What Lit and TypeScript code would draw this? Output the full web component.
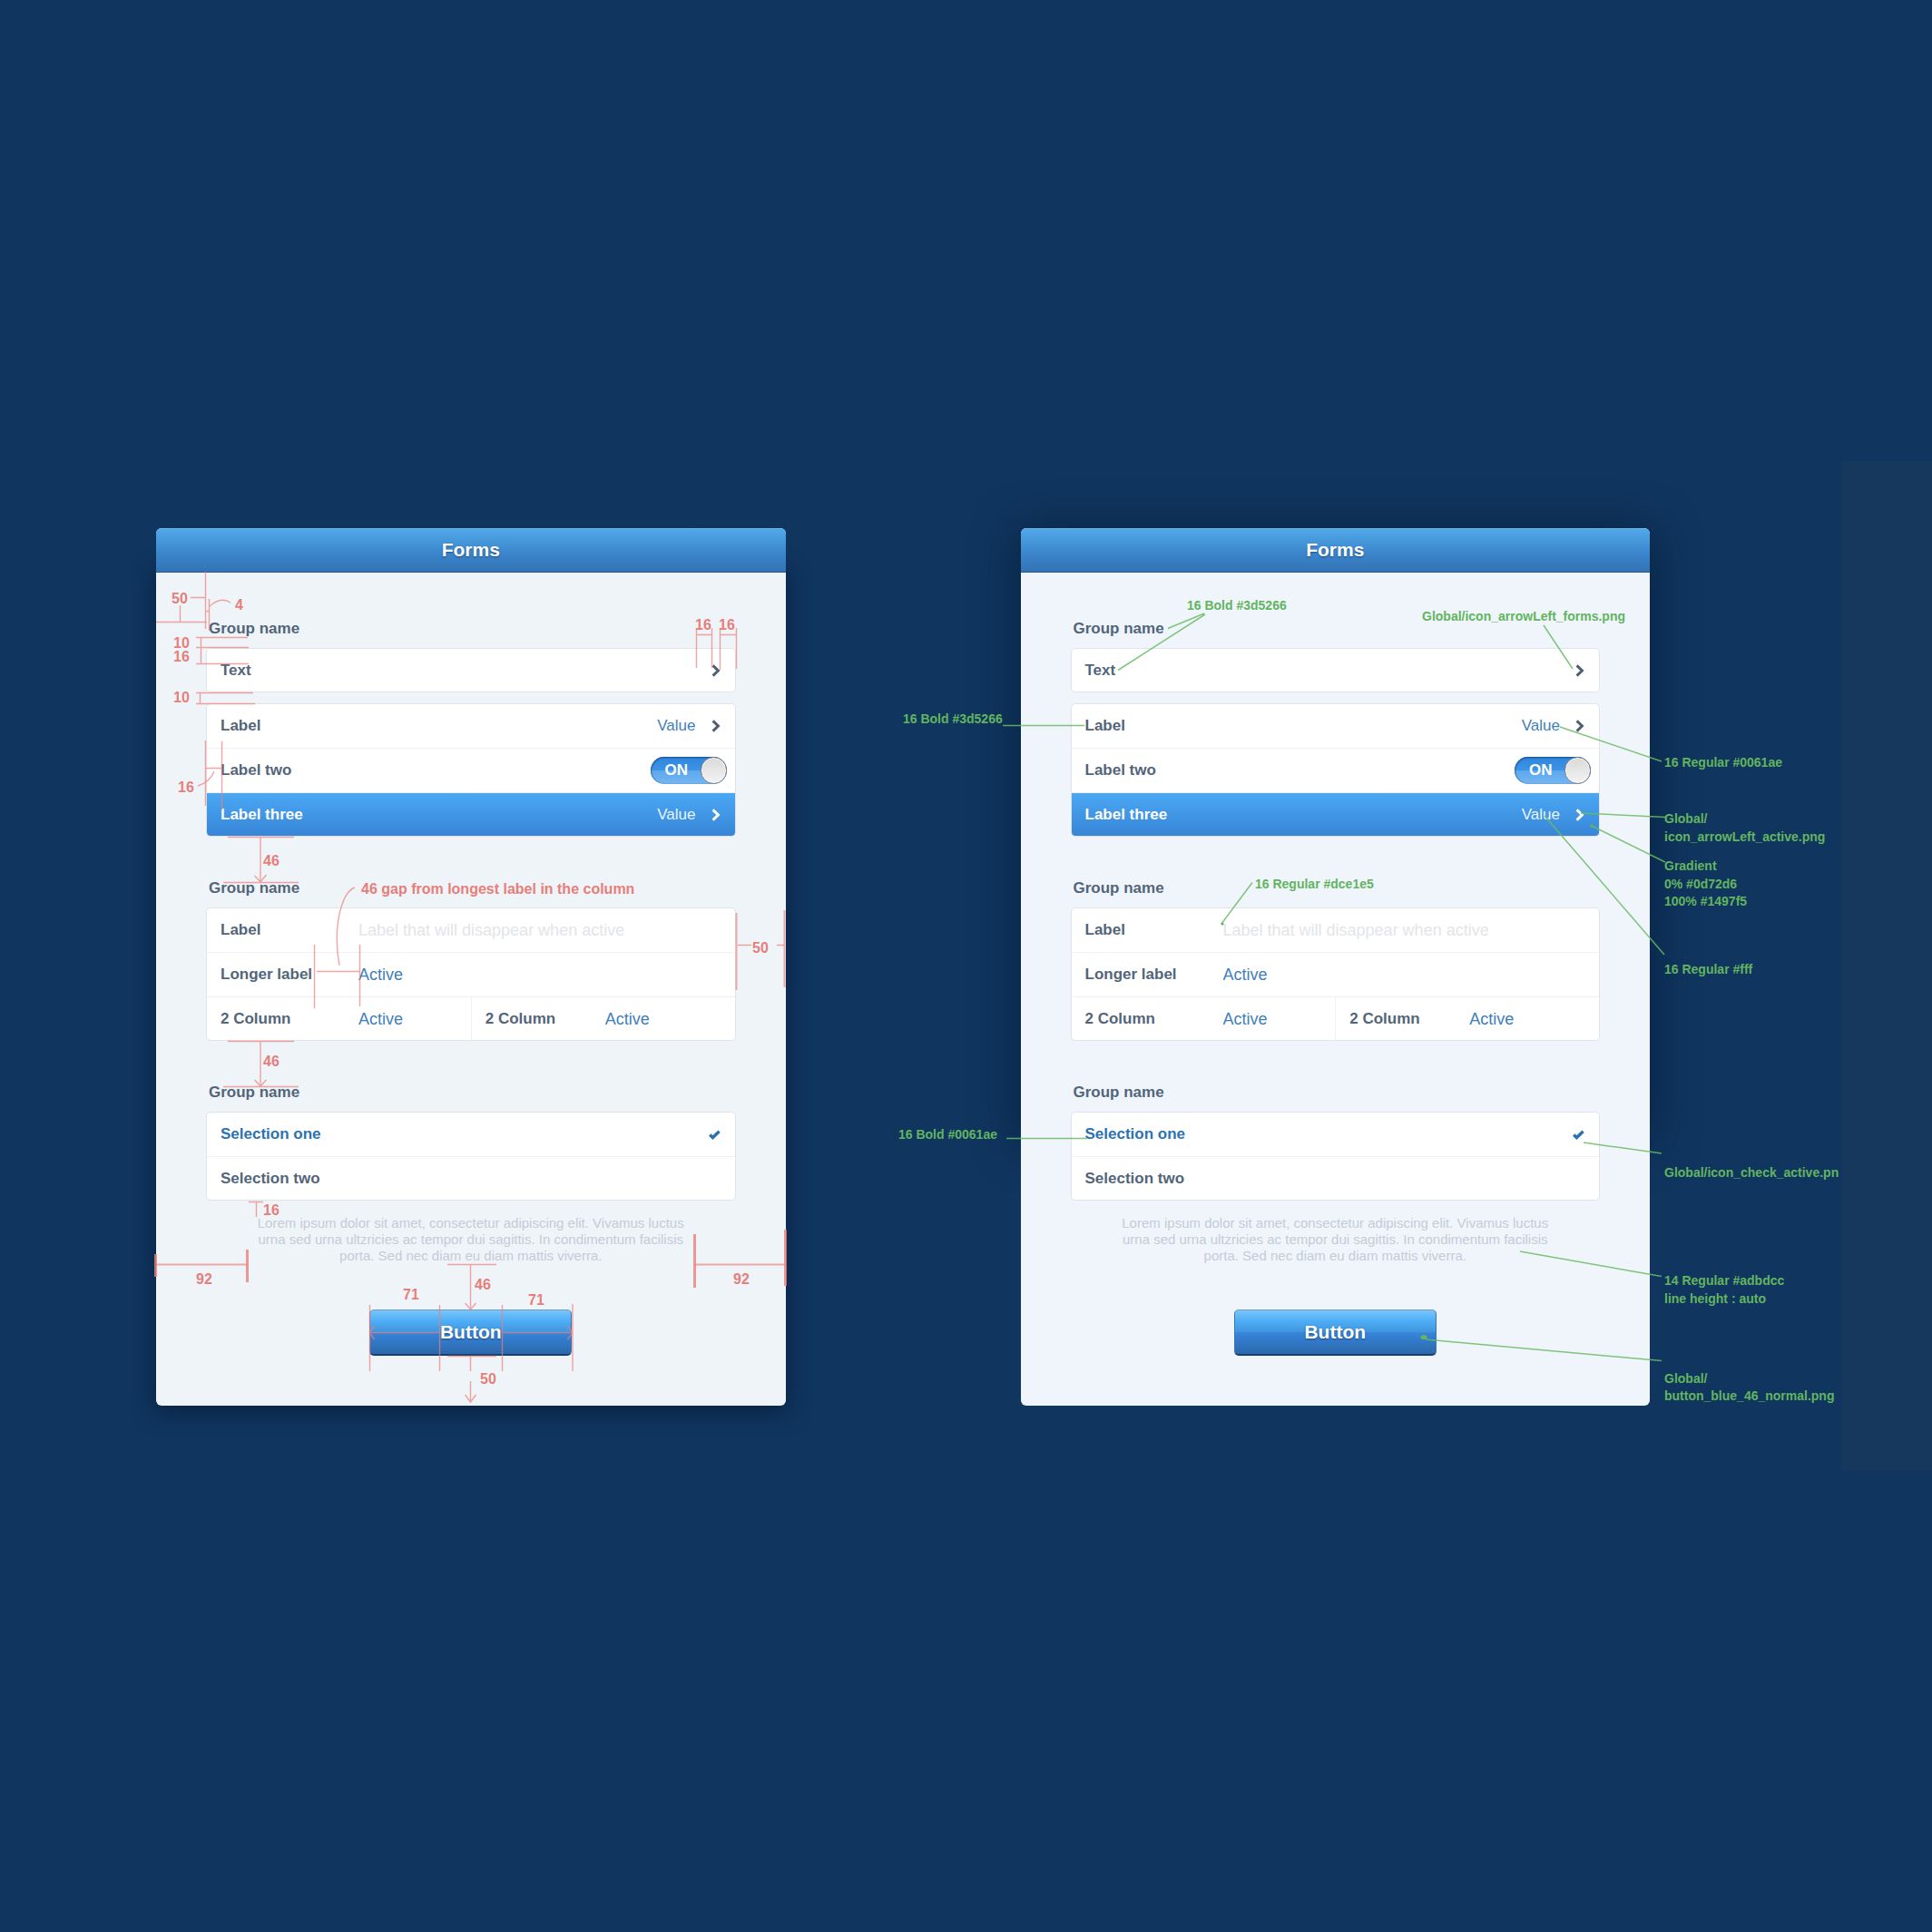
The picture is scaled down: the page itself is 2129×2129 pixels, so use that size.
import { LitElement, html, svg, css, nothing } from "lit";
import { customElement, property, state } from "lit/decorators.js";
import { classMap } from "lit/directives/class-map.js";

const chevron = html`<svg class="chevron" viewBox="0 0 10 14" aria-hidden="true">
  <path d="M1.6 1.4 L7.4 7 L1.6 12.6" />
</svg>`;

const check = html`<svg class="check" viewBox="0 0 13 11" aria-hidden="true">
  <path d="M1.2 5.6 L4.4 8.6 L11.6 1.8" />
</svg>`;

/** One phone-style form screen: title bar, grouped rows and a submit button. */
@customElement("form-panel")
class FormPanel extends LitElement {
  @property() tone = "cool";
  @state() private selected = 0;
  @state() private on = true;

  static styles = css`
    :host {
      display: block;
      position: relative;
      font-family: "Liberation Sans", Arial, sans-serif;
      font-size: 17px;
      line-height: 20px;
      color: #52657a;
    }
    .screen {
      border-radius: 6px;
      overflow: hidden;
      background: #eff4f9;
    }
    .screen.bright {
      background: #f0f5fc;
    }
    .bar {
      height: 49px;
      box-sizing: border-box;
      padding-bottom: 2px;
      display: flex;
      align-items: center;
      justify-content: center;
      background: linear-gradient(#50a8e8, #3a84cb 60%, #3373b5);
      border-top: 1px solid #6db5e8;
      border-bottom: 1px solid #28598f;
    }
    .bar h1 {
      margin: 0;
      font-size: 21px;
      line-height: 24px;
      color: #fff;
      text-shadow: 0 1px 2px rgba(10, 40, 90, 0.6);
    }
    .body {
      margin: 0;
      padding: 52px 55px 55px;
    }
    .group {
      display: flex;
      flex-direction: column;
      gap: 12px;
      margin-bottom: 47px;
    }
    .group:last-of-type {
      margin-bottom: 16px;
    }
    h2 {
      margin: 0 0 -1px;
      padding-left: 3px;
      font-size: 17px;
      line-height: 20px;
    }
    .card {
      border: 1px solid #dfe4eb;
      border-radius: 5px;
      background: #fff;
      overflow: hidden;
    }
    .row {
      display: flex;
      align-items: center;
      width: 100%;
      height: 49px;
      box-sizing: border-box;
      margin: 0;
      padding: 0 16px 0 15px;
      border: 0;
      border-bottom: 1px solid #eff1f4;
      background: none;
      font: inherit;
      font-weight: bold;
      color: inherit;
      text-align: left;
    }
    .row:last-child {
      height: 47px;
      border-bottom: 0;
    }
    .row .name {
      flex: 1;
    }
    .value {
      font-weight: normal;
      color: #3f80b9;
      margin-right: 17px;
    }
    .active {
      background: linear-gradient(#4ba8f3, #3785d8);
      color: #fff;
    }
    .active .value {
      color: #e9f4ff;
    }
    .chevron {
      width: 10px;
      height: 14px;
      fill: none;
      stroke: #4d6073;
      stroke-width: 3;
    }
    .active .chevron {
      stroke: #fff;
    }
    .check {
      width: 13px;
      height: 11px;
      fill: none;
      stroke: #2b72b2;
      stroke-width: 3.4;
    }
    .with-switch {
      padding-right: 9px;
    }
    .switch {
      display: grid;
      width: 84px;
      height: 30px;
    }
    .switch input,
    .track {
      grid-area: 1 / 1;
      margin: 0;
    }
    .switch input {
      opacity: 0;
      width: 100%;
      height: 100%;
    }
    .track {
      display: flex;
      align-items: center;
      justify-content: space-between;
      box-sizing: border-box;
      padding-left: 16px;
      border-radius: 15px;
      color: #fff;
      background: linear-gradient(#2f86dd, #3d93e6 50%, #5ba8ee 51%, #76b6f1);
      box-shadow: inset 0 1px 2px rgba(15, 60, 120, 0.8), inset 1px 0 1px rgba(15, 60, 120, 0.4);
      pointer-events: none;
    }
    .knob {
      width: 29px;
      height: 30px;
      box-sizing: border-box;
      border-radius: 15px;
      border: 1px solid #7d8189;
      background: linear-gradient(#d9d9da, #f3f3f3);
      box-shadow: inset 0 0 0 1px #fafafa;
    }
    .field {
      width: 152px;
      flex: none;
    }
    .row input.text {
      flex: 1;
      min-width: 0;
      width: 0;
      padding: 0;
      border: 0;
      outline: 0;
      background: none;
      font: inherit;
      font-size: 18px;
      font-weight: normal;
      color: #3f80b9;
    }
    input.text::placeholder {
      color: #e2e5e9;
      opacity: 1;
    }
    .split {
      display: grid;
      grid-template-columns: 1fr 1fr;
      padding: 0;
    }
    .half {
      display: flex;
      align-items: center;
      height: 100%;
      padding-left: 15px;
    }
    .half + .half {
      border-left: 1px solid #eff1f4;
    }
    .half + .half .field {
      width: 132px;
    }
    .choice input {
      appearance: none;
      width: 0;
      height: 0;
      margin: 0;
    }
    .chosen {
      color: #2b72b2;
    }
    .help {
      margin: 0 auto 50px;
      max-width: 510px;
      font-size: 15px;
      line-height: 18px;
      text-align: center;
      color: #c3ccd7;
    }
    .submit {
      display: block;
      width: 223px;
      height: 51px;
      margin: 0 auto;
      padding: 0;
      border: 1px solid #3b77b0;
      border-top-color: #6b9fca;
      border-bottom: 2px solid #173f70;
      border-radius: 5px;
      background: linear-gradient(#7cc4fa, #50b0f7 22%, #3f96de 49%, #3684da 52%, #2c68ab);
      font: bold 21px/24px "Liberation Sans", Arial, sans-serif;
      color: #fff;
      text-shadow: 0 1px 2px rgba(10, 40, 90, 0.6);
    }
  `;

  private choice(label: string, index: number) {
    const chosen = this.selected === index;
    return html`<label class=${classMap({ row: true, choice: true, chosen })}>
      <input type="radio" name="selection" .checked=${chosen} @change=${() => (this.selected = index)} />
      <span class="name">${label}</span>
      ${chosen ? check : nothing}
    </label>`;
  }

  render() {
    return html`<section class=${classMap({ screen: true, bright: this.tone === "bright" })}>
        <header class="bar"><h1>Forms</h1></header>
        <form class="body" @submit=${(e: Event) => e.preventDefault()}>
          <div class="group">
            <h2>Group name</h2>
            <div class="card">
              <button type="button" class="row"><span class="name">Text</span>${chevron}</button>
            </div>
            <div class="card">
              <button type="button" class="row">
                <span class="name">Label</span><span class="value">Value</span>${chevron}
              </button>
              <div class="row with-switch">
                <label class="name" for="switch">Label two</label>
                <span class="switch">
                  <input id="switch" type="checkbox" role="switch" .checked=${this.on}
                    @change=${() => (this.on = !this.on)} />
                  <span class="track" aria-hidden="true">${this.on ? "ON" : ""}<span class="knob"></span></span>
                </span>
              </div>
              <button type="button" class="row active">
                <span class="name">Label three</span><span class="value">Value</span>${chevron}
              </button>
            </div>
          </div>
          <div class="group">
            <h2>Group name</h2>
            <div class="card">
              <div class="row">
                <label class="field" for="short">Label</label>
                <input class="text" id="short" type="text" placeholder="Label that will disappear when active" />
              </div>
              <div class="row">
                <label class="field" for="longer">Longer label</label>
                <input class="text" id="longer" type="text" value="Active" />
              </div>
              <div class="row split">
                <div class="half">
                  <label class="field" for="first">2 Column</label>
                  <input class="text" id="first" type="text" value="Active" />
                </div>
                <div class="half">
                  <label class="field" for="second">2 Column</label>
                  <input class="text" id="second" type="text" value="Active" />
                </div>
              </div>
            </div>
          </div>
          <div class="group">
            <h2>Group name</h2>
            <div class="card">${this.choice("Selection one", 0)}${this.choice("Selection two", 1)}</div>
          </div>
          <p class="help">
            Lorem ipsum dolor sit amet, consectetur adipiscing elit. Vivamus luctus<br />
            urna sed urna ultzricies ac tempor dui sagittis. In condimentum facilisis<br />
            porta. Sed nec diam eu diam mattis viverra.
          </p>
          <button class="submit" type="submit">Button</button>
        </form>
      </section>
      <slot></slot>`;
  }
}

type Note = [x: number, y: number, text: string];

// Board coordinates; each overlay's viewBox starts at its panel's corner.
const measureNotes: Note[] = [
  [189, 665, "50"], [259, 672, "4"], [191, 714, "10"], [191, 729, "16"], [191, 774, "10"],
  [196, 873, "16"], [766, 694, "16"], [792, 694, "16"], [290, 954, "46"],
  [398, 985, "46 gap from longest label in the column"], [829, 1050, "50"], [290, 1175, "46"],
  [290, 1339, "16"], [216, 1415, "92"], [808, 1415, "92"], [523, 1421, "46"],
  [444, 1432, "71"], [582, 1438, "71"], [529, 1525, "50"],
];

const measureThin = [
  "M210 658.5H226 M226.5 630V693 M198.5 667V685 M172 685.5H228 M230.5 660V695 M226 673.5H231",
  "M231 668Q243 657 254 664",
  "M216 702.5H273 M216 713.5H274 M216 731.5H274 M221.5 702V731",
  "M216 763.5H279 M216 775.5H281 M220.5 763V775",
  "M226.5 816V888 M244.5 817V893 M227 846.5H244 M236 850Q231 862 218 866",
  "M767.5 692V736 M784.5 692V736 M793.5 692V738 M811.5 692V737 M767 699.5H784 M793 699.5H811",
  "M251 922.5H324 M287 922V971 M246 972.5H329 M280.5 965L287 972L293.5 964",
  "M391 978C377 983 366 1020 374 1064",
  "M346.5 1041V1111 M396.5 1041V1109 M349 1070.5H396",
  "M813 1041.5H828 M856 1041.5H864",
  "M251 1147.5H324 M287 1147V1197 M246 1197.5H329 M280.5 1190L287 1197L293.5 1190",
  "M274 1324.5H290 M282.5 1324V1341",
  "M493 1393.5H547 M518.5 1393V1443 M512.5 1436L518.5 1443L524.5 1436",
  "M407.5 1438V1511 M484.5 1438V1511 M553.5 1438V1511 M631 1437V1511",
  "M407 1468.5H484 M412.5 1461L407.5 1468.5L412.5 1476 M554 1468.5H631 M625.5 1461L631 1468.5L625.5 1476",
  "M493 1494.5H547 M518.5 1494V1511 M518.5 1522V1545 M512.5 1537L518.5 1545L524.5 1537",
].join(" ");

const measureMedium = "M811.5 1006V1091 M864.5 1003V1088 M172 1393.5H272 M766 1393.5H865";
const measureThick = "M171.5 1382V1407 M272.5 1377V1413 M765.5 1360V1419 M865.5 1355V1417";

const styleNotes: Note[] = [
  [1308, 672, "16 Bold #3d5266"], [1567, 684, "Global/icon_arrowLeft_forms.png"],
  [995, 797, "16 Bold #3d5266"], [990, 1255, "16 Bold #0061ae"], [1383, 979, "16 Regular #dce1e5"],
  [1834, 845, "16 Regular #0061ae"], [1834, 907, "Global/"], [1834, 927, "icon_arrowLeft_active.png"],
  [1834, 959, "Gradient"], [1834, 979, "0% #0d72d6"], [1834, 998, "100% #1497f5"],
  [1834, 1073, "16 Regular #fff"], [1834, 1297, "Global/icon_check_active.pn"],
  [1834, 1416, "14 Regular #adbdcc"], [1834, 1436, "line height : auto"],
  [1834, 1524, "Global/"], [1834, 1543, "button_blue_46_normal.png"],
];

const styleLines = [
  "M1327 676L1287 692.5 M1328 677L1232 738.5 M1701 689L1733 737",
  "M1105 799.5H1195 M1109 1254.5H1198 M1380 972.5L1346 1018",
  "M1719 801L1831 839 M1742 896L1835 900.5 M1754 910L1835 950 M1702 899L1834 1052",
  "M1745 1259L1831 1271 M1675 1379L1831 1406.5 M1571 1476L1831 1499.5",
].join(" ");

@customElement("app-root")
class AppRoot extends LitElement {
  static styles = css`
    :host {
      display: flex;
      flex-direction: column;
      justify-content: center;
      min-height: 100vh;
      background: #10355f;
    }
    .board {
      display: flex;
      align-items: flex-start;
      gap: 259px;
      padding: 74px 311px 72px 172px;
      background: linear-gradient(#17385d, #17385d) right / 99px 100% no-repeat;
    }
    form-panel {
      flex: 1 1 0;
      min-width: 0;
      isolation: isolate;
    }
    form-panel::before {
      content: "";
      position: absolute;
      z-index: -1;
      inset: 0;
      border-radius: 6px;
    }
    .measured::before {
      inset: 40px 0 0;
      box-shadow: 0 6px 24px rgba(4, 20, 42, 0.6);
    }
    .styled::before {
      inset: 4px 0 290px;
      box-shadow: 0 0 50px rgba(4, 20, 42, 0.6);
    }
    .notes {
      position: absolute;
      top: 0;
      left: 0;
      width: 694px;
      height: 967px;
      overflow: visible;
      pointer-events: none;
      font-family: "Liberation Sans", Arial, sans-serif;
      font-weight: bold;
    }
    .notes path {
      fill: none;
    }
    .red {
      font-size: 16px;
      fill: #e67f79;
      stroke: #ec7f7b;
    }
    .green {
      font-size: 14px;
      fill: #62b45f;
      stroke: #6abb64;
    }
    .notes text {
      stroke: none;
    }
    .thin {
      stroke-width: 1.4;
      opacity: 0.7;
    }
    .medium {
      stroke-width: 2;
      opacity: 0.65;
    }
    .thick {
      stroke-width: 3;
      opacity: 0.8;
    }
    .leader {
      stroke-width: 1.5;
      opacity: 0.85;
    }
    .dot {
      stroke: none;
    }
  `;

  private notes(list: Note[]) {
    return list.map(([x, y, text]) => svg`<text x=${x} y=${y}>${text}</text>`);
  }

  render() {
    return html`<main class="board">
      <form-panel class="measured">
        <svg class="notes red" viewBox="172 582 694 967">
          <path class="thin" d=${measureThin} />
          <path class="medium" d=${measureMedium} />
          <path class="thick" d=${measureThick} />
          ${this.notes(measureNotes)}
        </svg>
      </form-panel>
      <form-panel class="styled" tone="bright">
        <svg class="notes green" viewBox="1125 582 694 967">
          <path class="leader" d=${styleLines} />
          <ellipse class="dot" cx="1569" cy="1473.5" rx="3.6" ry="2.6" />
          <circle class="dot" cx="1754" cy="910" r="1.8" />
          <circle class="dot" cx="1347" cy="1018" r="1.6" />
          ${this.notes(styleNotes)}
        </svg>
      </form-panel>
    </main>`;
  }
}
